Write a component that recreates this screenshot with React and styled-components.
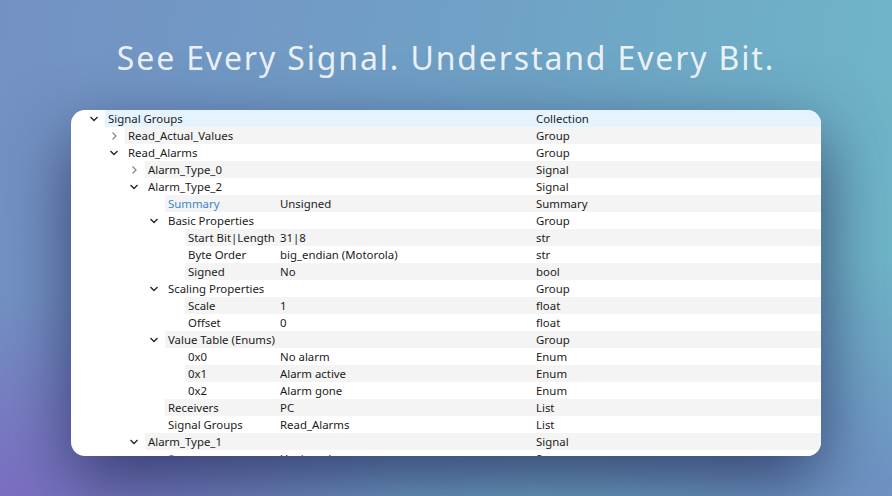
import React from 'react'
import styled, { createGlobalStyle } from 'styled-components'

const GlobalStyle = createGlobalStyle`
  html, body {
    margin: 0;
    padding: 0;
    height: 100%;
    overflow: hidden;
  }
  body {
    font-family: "Noto Sans", "DejaVu Sans", sans-serif;
  }
`

const rows = [
  { level: 0, toggle: 'open', name: 'Signal Groups', type: 'Collection', selected: true },
  { level: 1, toggle: 'closed', name: 'Read_Actual_Values', type: 'Group' },
  { level: 1, toggle: 'open', name: 'Read_Alarms', type: 'Group' },
  { level: 2, toggle: 'closed', name: 'Alarm_Type_0', type: 'Signal' },
  { level: 2, toggle: 'open', name: 'Alarm_Type_2', type: 'Signal' },
  { level: 3, name: 'Summary', value: 'Unsigned', type: 'Summary', link: true },
  { level: 3, toggle: 'open', name: 'Basic Properties', type: 'Group' },
  { level: 4, name: 'Start Bit|Length', value: '31|8', type: 'str' },
  { level: 4, name: 'Byte Order', value: 'big_endian (Motorola)', type: 'str' },
  { level: 4, name: 'Signed', value: 'No', type: 'bool' },
  { level: 3, toggle: 'open', name: 'Scaling Properties', type: 'Group' },
  { level: 4, name: 'Scale', value: '1', type: 'float' },
  { level: 4, name: 'Offset', value: '0', type: 'float' },
  { level: 3, toggle: 'open', name: 'Value Table (Enums)', type: 'Group' },
  { level: 4, name: '0x0', value: 'No alarm', type: 'Enum' },
  { level: 4, name: '0x1', value: 'Alarm active', type: 'Enum' },
  { level: 4, name: '0x2', value: 'Alarm gone', type: 'Enum' },
  { level: 3, name: 'Receivers', value: 'PC', type: 'List' },
  { level: 3, name: 'Signal Groups', value: 'Read_Alarms', type: 'List' },
  { level: 2, toggle: 'open', name: 'Alarm_Type_1', type: 'Signal' },
  { level: 3, name: 'Summary', value: 'Unsigned', type: 'Summary', link: true },
]

const Chevron = ({ open }) => (
  <svg width="10" height="10" viewBox="0 0 10 10">
    {open ? (
      <path d="M1.5 3 L5 6.5 L8.5 3" fill="none" stroke="#222" strokeWidth="1.3" />
    ) : (
      <path d="M3.5 1.5 L7 5 L3.5 8.5" fill="none" stroke="#8a8a8a" strokeWidth="1.3" />
    )}
  </svg>
)

const App = () => {
  return (
    <Page>
      <GlobalStyle />
      <Title>See Every Signal. Understand Every Bit.</Title>
      <Panel>
        {rows.map((row, i) => (
          <Row key={i}>
            <Indent level={row.level} />
            <Toggle>{row.toggle && <Chevron open={row.toggle === 'open'} />}</Toggle>
            <RowBody bg={row.selected ? '#e5f3fe' : i % 2 === 1 ? '#f4f4f4' : '#ffffff'}>
              <NameCell level={row.level} link={row.link}>{row.name}</NameCell>
              <ValueCell>{row.value}</ValueCell>
              <TypeCell>{row.type}</TypeCell>
            </RowBody>
          </Row>
        ))}
      </Panel>
    </Page>
  )
}

export default App

const Page = styled.div`
  width: 892px;
  height: 496px;
  box-sizing: border-box;
  padding: 0 71px;
  display: flex;
  flex-direction: column;
  background:
    radial-gradient(ellipse 60% 55% at 0% 100%, rgba(124, 108, 194, 0.95), rgba(124, 108, 194, 0) 75%),
    radial-gradient(ellipse 50% 60% at 100% 100%, rgba(112, 140, 195, 0.9), rgba(112, 140, 195, 0) 80%),
    linear-gradient(100deg, #7491c4 0%, #6fa3c6 55%, #6fb8c8 100%);
  overflow: hidden;
`

const Title = styled.h1`
  margin: 0;
  height: 110px;
  display: flex;
  align-items: center;
  justify-content: center;
  padding-top: 4px;
  box-sizing: border-box;
  font-family: "Noto Sans", "Open Sans", sans-serif;
  font-weight: 400;
  font-size: 32px;
  letter-spacing: 1.85px;
  color: rgba(245, 248, 252, 0.95);
  white-space: nowrap;
`

const Panel = styled.div`
  height: 346px;
  background: #ffffff;
  border-radius: 14px;
  overflow: hidden;
  box-shadow: 0 26px 70px rgba(36, 40, 88, 0.78);
`

const Row = styled.div`
  display: flex;
  height: 17px;
  font-size: 11.4px;
  line-height: 17px;
  color: #1b1b1b;
`

const Indent = styled.div`
  flex: none;
  width: ${p => 14 + p.level * 20}px;
`

const Toggle = styled.div`
  flex: none;
  width: 20px;
  display: flex;
  align-items: center;
  justify-content: center;
  padding-right: 2px;
  box-sizing: border-box;
`

const RowBody = styled.div`
  flex: 1;
  display: flex;
  background: ${p => p.bg};
  white-space: nowrap;
`

const NameCell = styled.div`
  flex: none;
  width: ${p => 175 - p.level * 20}px;
  padding-left: 3px;
  box-sizing: border-box;
  color: ${p => (p.link ? '#3b87cc' : 'inherit')};
`

const ValueCell = styled.div`
  flex: none;
  width: 256px;
`

const TypeCell = styled.div`
  flex: 1;
`
